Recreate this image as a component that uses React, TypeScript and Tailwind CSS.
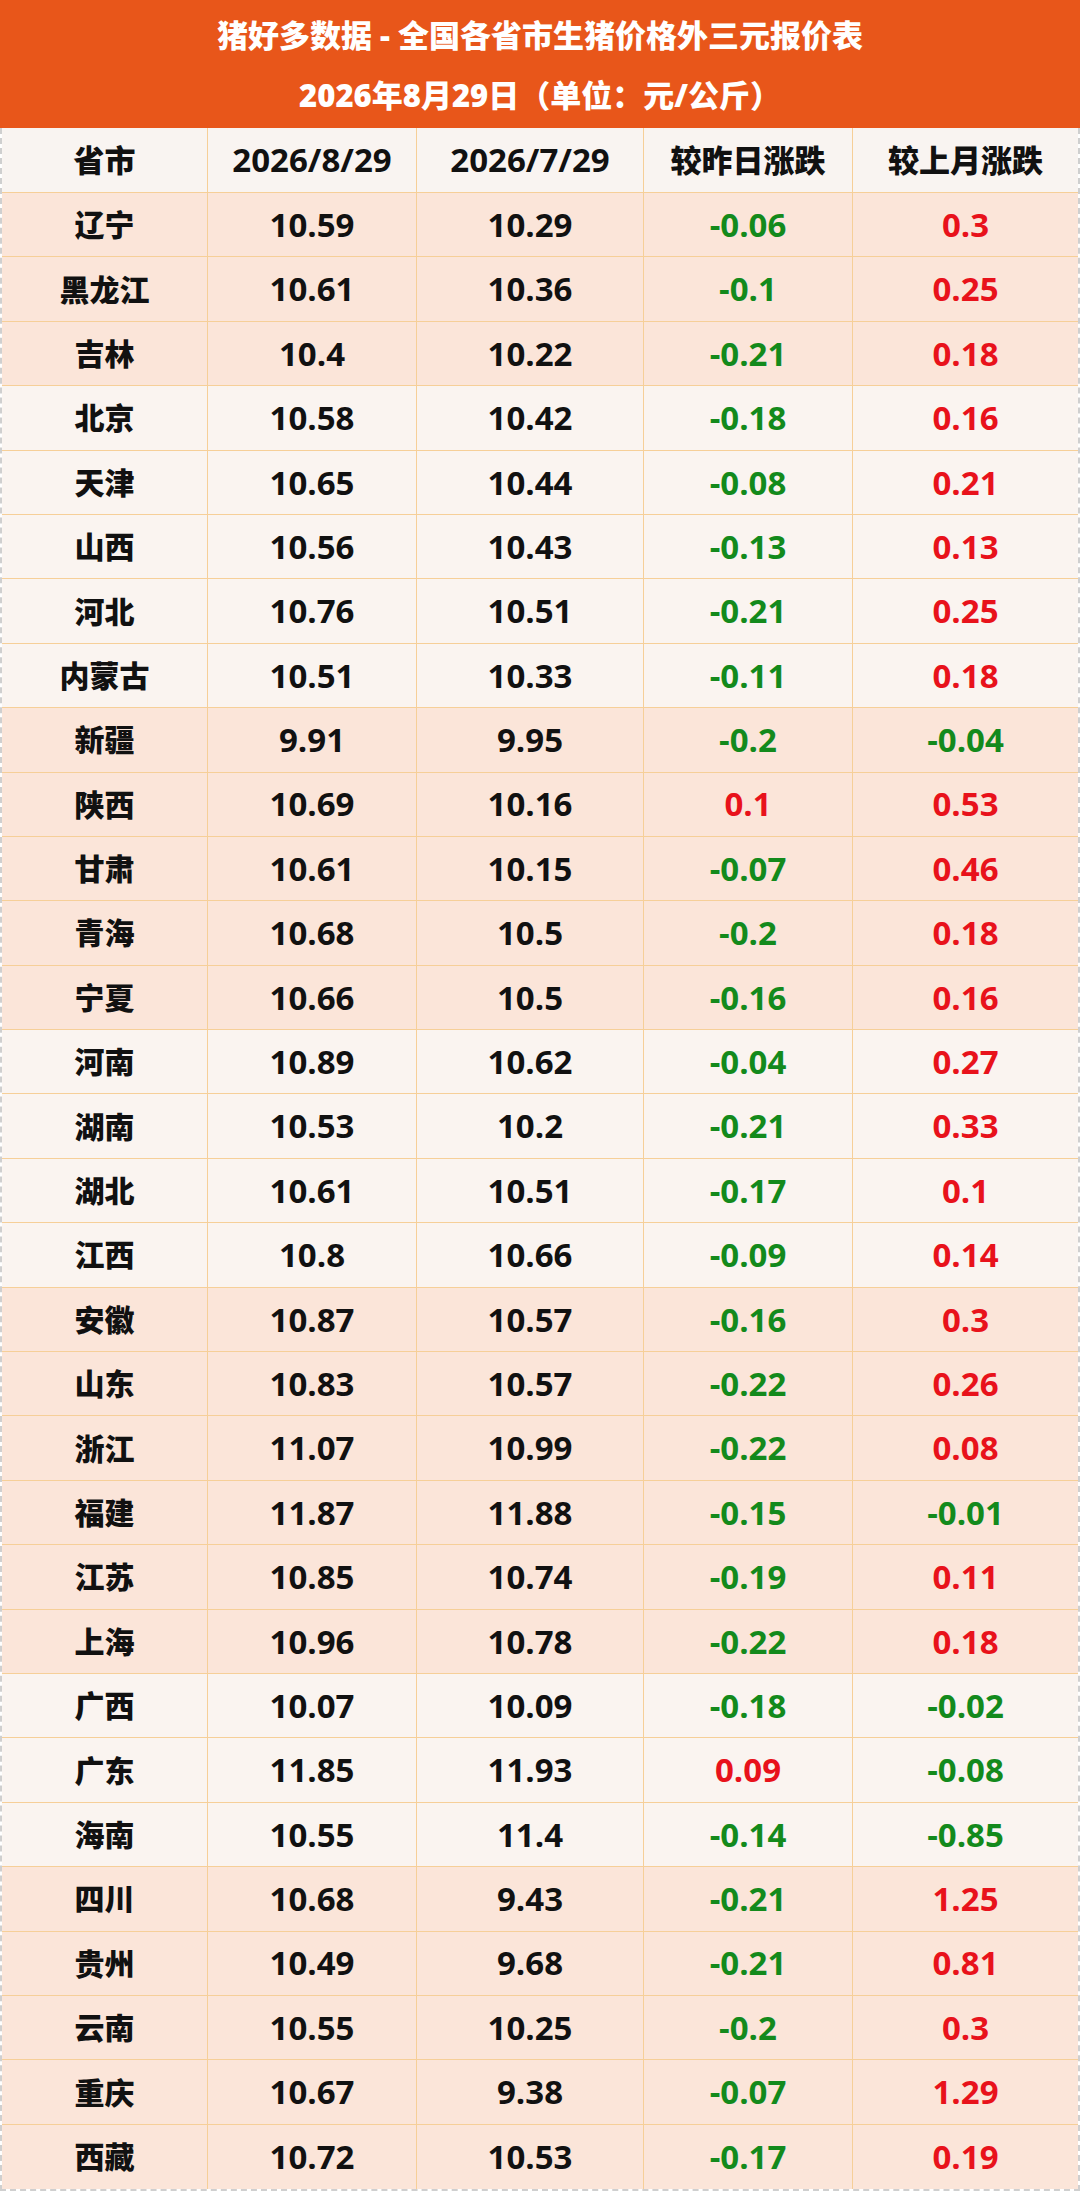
const rows: [string, string, string, string, string][] = [
  ["辽宁", "10.59", "10.29", "-0.06", "0.3"],
  ["黑龙江", "10.61", "10.36", "-0.1", "0.25"],
  ["吉林", "10.4", "10.22", "-0.21", "0.18"],
  ["北京", "10.58", "10.42", "-0.18", "0.16"],
  ["天津", "10.65", "10.44", "-0.08", "0.21"],
  ["山西", "10.56", "10.43", "-0.13", "0.13"],
  ["河北", "10.76", "10.51", "-0.21", "0.25"],
  ["内蒙古", "10.51", "10.33", "-0.11", "0.18"],
  ["新疆", "9.91", "9.95", "-0.2", "-0.04"],
  ["陕西", "10.69", "10.16", "0.1", "0.53"],
  ["甘肃", "10.61", "10.15", "-0.07", "0.46"],
  ["青海", "10.68", "10.5", "-0.2", "0.18"],
  ["宁夏", "10.66", "10.5", "-0.16", "0.16"],
  ["河南", "10.89", "10.62", "-0.04", "0.27"],
  ["湖南", "10.53", "10.2", "-0.21", "0.33"],
  ["湖北", "10.61", "10.51", "-0.17", "0.1"],
  ["江西", "10.8", "10.66", "-0.09", "0.14"],
  ["安徽", "10.87", "10.57", "-0.16", "0.3"],
  ["山东", "10.83", "10.57", "-0.22", "0.26"],
  ["浙江", "11.07", "10.99", "-0.22", "0.08"],
  ["福建", "11.87", "11.88", "-0.15", "-0.01"],
  ["江苏", "10.85", "10.74", "-0.19", "0.11"],
  ["上海", "10.96", "10.78", "-0.22", "0.18"],
  ["广西", "10.07", "10.09", "-0.18", "-0.02"],
  ["广东", "11.85", "11.93", "0.09", "-0.08"],
  ["海南", "10.55", "11.4", "-0.14", "-0.85"],
  ["四川", "10.68", "9.43", "-0.21", "1.25"],
  ["贵州", "10.49", "9.68", "-0.21", "0.81"],
  ["云南", "10.55", "10.25", "-0.2", "0.3"],
  ["重庆", "10.67", "9.38", "-0.07", "1.29"],
  ["西藏", "10.72", "10.53", "-0.17", "0.19"],
];

// region groups alternate peach / pale
const groupSizes = [3, 5, 5, 4, 6, 3, 5];
const peachRows = new Set<number>();
{
  let i = 0;
  groupSizes.forEach((n, g) => {
    for (let k = 0; k < n; k++) {
      if (g % 2 === 0) peachRows.add(i);
      i++;
    }
  });
}

const font = {
  fontFamily: '"Open Sans", "Noto Sans CJK SC", sans-serif',
};

function changeColor(v: string) {
  return v.startsWith("-") ? "text-[#138a1c]" : "text-[#e8121b]";
}

function Cell({
  children,
  className = "",
  last = false,
}: {
  children: React.ReactNode;
  className?: string;
  last?: boolean;
}) {
  return (
    <div
      className={`flex items-center justify-center ${
        last ? "" : "border-r border-[#f6cf98]"
      } ${className}`}
    >
      {children}
    </div>
  );
}

export default function App() {
  return (
    <div className="w-[1080px] bg-white text-[#111] font-bold" style={font}>
      <div className="h-[128px] bg-[#e8561a] flex flex-col items-center text-white text-[31px] leading-none font-black">
        <div className="h-[66px] flex items-center pt-1">
          猪好多数据 - 全国各省市生猪价格外三元报价表
        </div>
        <div className="h-[62px] flex items-center pb-1">
          2026年8月29日（单位：元/公斤）
        </div>
      </div>
      <div className="border-x-2 border-b-2 border-dashed border-[#cfcfcf]">
        <div className="grid grid-cols-[206px_209px_227px_209px_1fr] h-[65px] bg-[#f9f4f1] border-b border-[#f6cf98] text-[31px] font-black">
          <Cell>省市</Cell>
          <Cell className="text-[33px] font-bold">2026/8/29</Cell>
          <Cell className="text-[33px] font-bold">2026/7/29</Cell>
          <Cell>较昨日涨跌</Cell>
          <Cell last>较上月涨跌</Cell>
        </div>
        {rows.map((r, i) => (
          <div
            key={r[0]}
            className={`grid grid-cols-[206px_209px_227px_209px_1fr] h-[64.4px] text-[33px] ${
              i === rows.length - 1 ? "" : "border-b border-[#f6cf98]"
            } ${peachRows.has(i) ? "bg-[#fbe5d9]" : "bg-[#faf4f0]"}`}
          >
            <Cell className="text-[30px] font-black">{r[0]}</Cell>
            <Cell>{r[1]}</Cell>
            <Cell>{r[2]}</Cell>
            <Cell className={changeColor(r[3])}>{r[3]}</Cell>
            <Cell last className={changeColor(r[4])}>
              {r[4]}
            </Cell>
          </div>
        ))}
      </div>
    </div>
  );
}
